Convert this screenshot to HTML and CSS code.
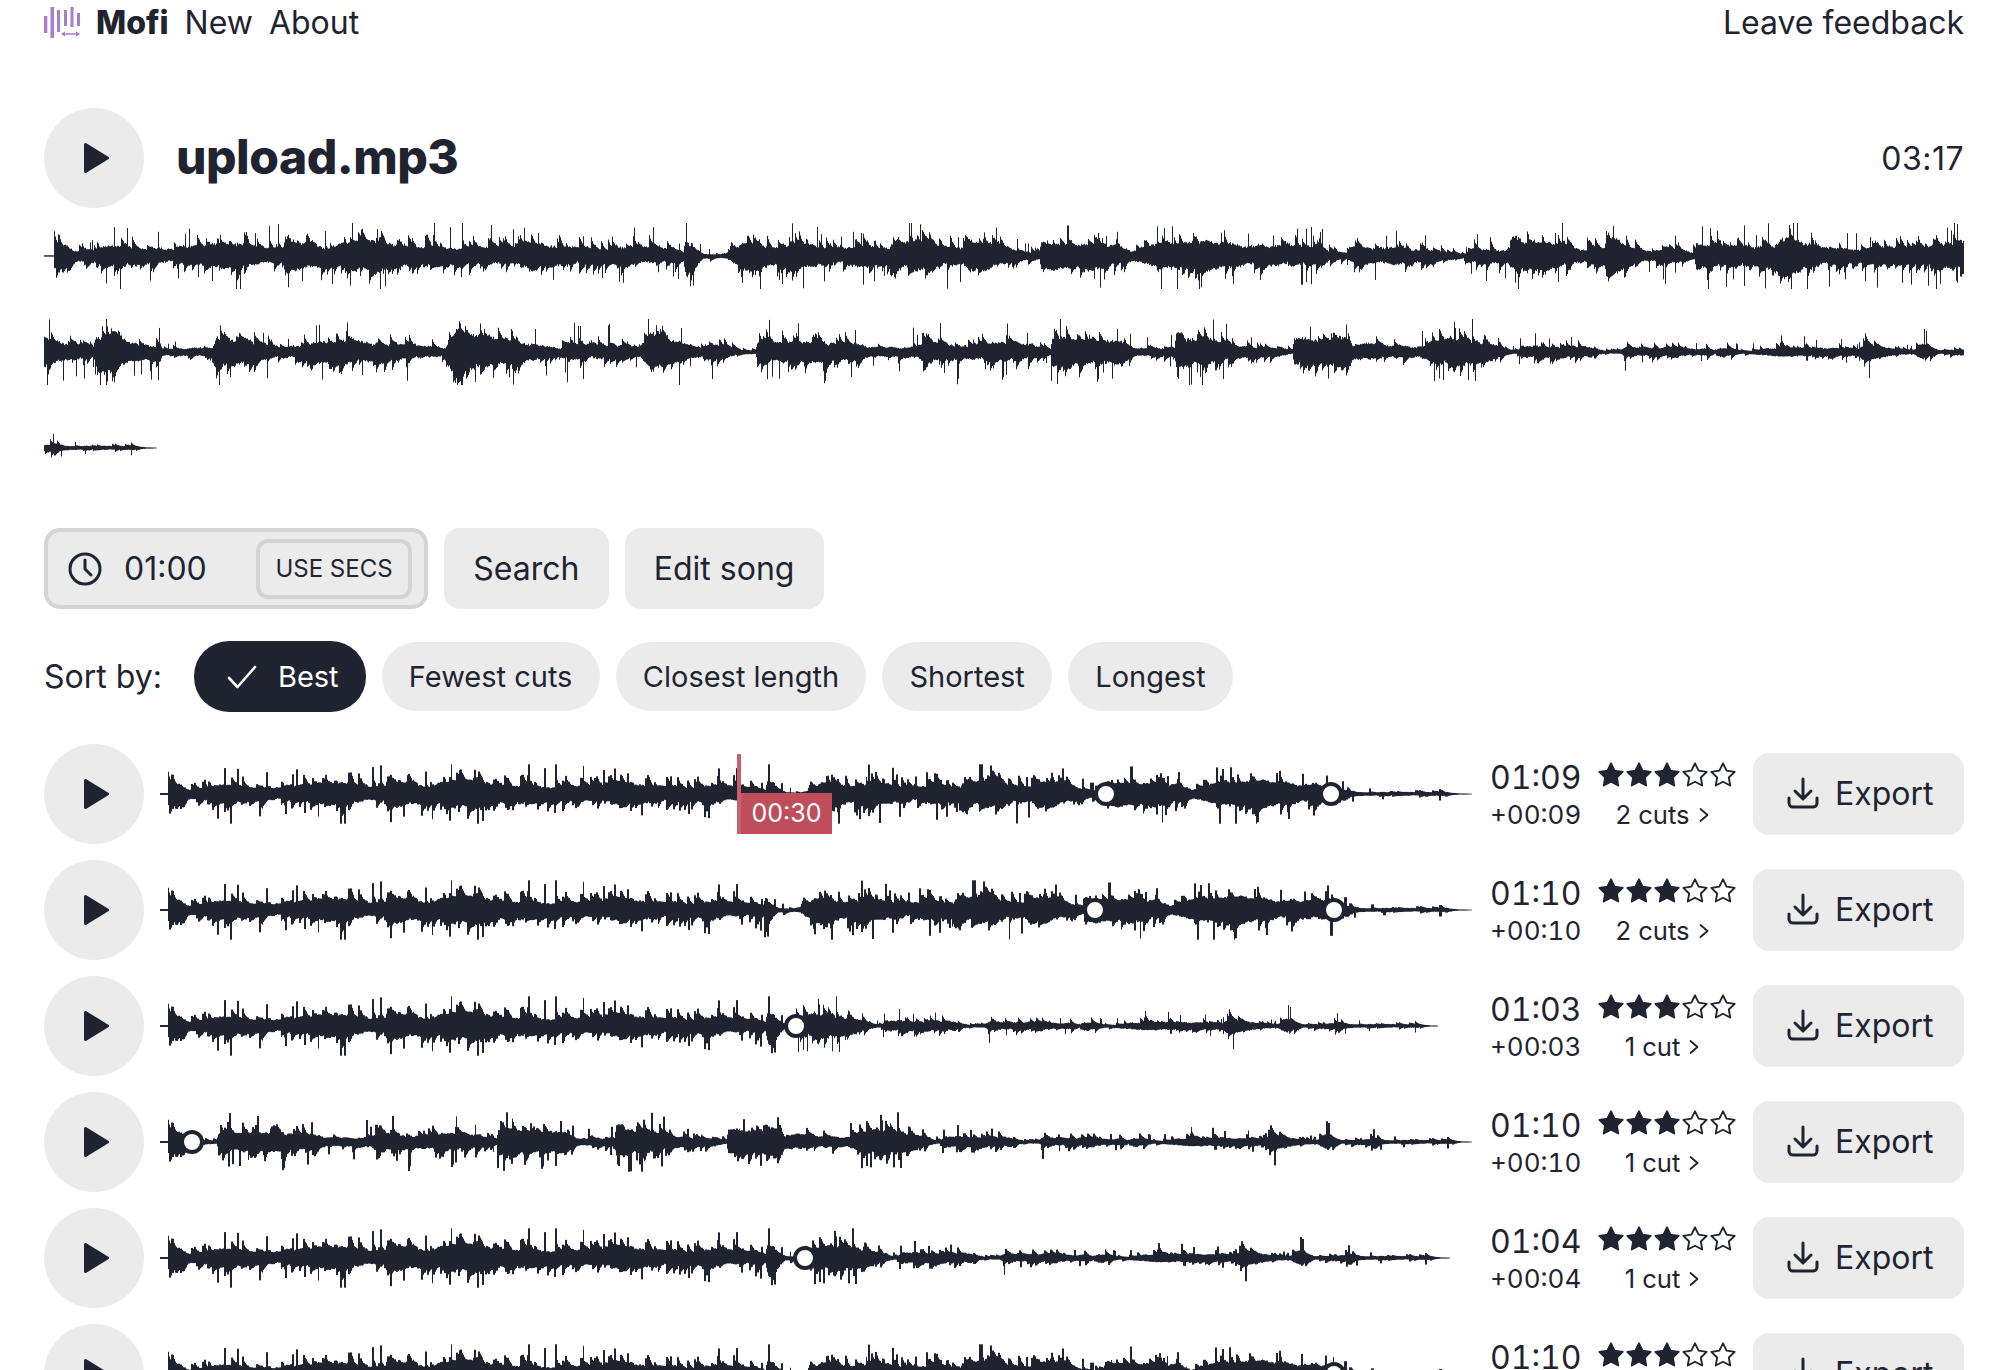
FILE: index.html
```html
<!DOCTYPE html>
<html lang="en">

<head>
    <meta charset="UTF-8">
    <meta name="viewport" content="width=device-width, initial-scale=1.0">
    <title>Mofi</title>
    <link rel="stylesheet" href="styles.css">
</head>

<body>
    <!-- icons used more than once -->
    <svg class="defs" width="0" height="0">
        <symbol id="i-play" viewBox="0 0 25 30">
            <path d="M1.5 1.5 L23.5 15 L1.5 28.5 Z" fill="currentColor" stroke="currentColor" stroke-width="3" stroke-linejoin="round" />
        </symbol>
        <symbol id="i-star" viewBox="0 0 24 24">
            <polygon points="12,2 15.09,8.26 22,9.27 17,14.14 18.18,21.02 12,17.77 5.82,21.02 7,14.14 2,9.27 8.91,8.26" />
        </symbol>
        <symbol id="i-chev" viewBox="0 0 10 14">
            <path d="M1.5 1 L8.5 7 L1.5 13" fill="none" stroke="currentColor" stroke-width="1.8" stroke-linecap="round" stroke-linejoin="round" />
        </symbol>
        <symbol id="i-down" viewBox="0 0 32 32">
            <path d="M16 2 V21 M8 14 L16 22 L24 14 M2 21 V26 A4 4 0 0 0 6 30 H26 A4 4 0 0 0 30 26 V21" fill="none" stroke="currentColor" stroke-width="3" stroke-linecap="round" stroke-linejoin="round" />
        </symbol>
        <symbol id="i-stars" viewBox="0 0 140 28">
            <use href="#i-star" x="0" y="0" width="28" height="28" class="star-on" />
            <use href="#i-star" x="28" y="0" width="28" height="28" class="star-on" />
            <use href="#i-star" x="56" y="0" width="28" height="28" class="star-on" />
            <use href="#i-star" x="84" y="0" width="28" height="28" />
            <use href="#i-star" x="112" y="0" width="28" height="28" />
        </symbol>
    </svg>

    <nav class="nav">
        <svg class="logo" viewBox="0 0 36 32" width="36" height="32">
            <g fill="#a77dd1">
                <rect x="0" y="9" width="3.3" height="17" />
                <rect x="6.5" y="0" width="3.5" height="31" />
                <rect x="13" y="3" width="3" height="22" />
                <rect x="20" y="3" width="3" height="16" />
                <rect x="26.5" y="0" width="3" height="20" />
                <rect x="33" y="6" width="3" height="13" />
                <path d="M17 27 L21 24.5 V26.3 H32 V24.5 L36 27 L32 29.5 V27.7 H21 V29.5 Z" />
            </g>
        </svg>
        <a class="brand">Mofi</a>
        <a>New</a>
        <a>About</a>
        <a class="feedback">Leave feedback</a>
    </nav>

    <header class="song">
        <button class="play"><svg width="25" height="30"><use href="#i-play" /></svg></button>
        <h1>upload.mp3</h1>
        <span class="dur">03:17</span>
    </header>

    <section class="lines">
        <canvas class="wave" data-line="0" width="1920" height="96"></canvas>
        <canvas class="wave" data-line="1" width="1920" height="96"></canvas>
        <canvas class="wave" data-line="2" width="1920" height="96"></canvas>
    </section>

    <div class="controls">
        <div class="target">
            <svg class="clock" viewBox="0 0 34 34" width="34" height="34">
                <circle cx="17" cy="17" r="15" fill="none" stroke="currentColor" stroke-width="3" />
                <path d="M17 8 V17 L23 23" fill="none" stroke="currentColor" stroke-width="3" stroke-linecap="round" stroke-linejoin="round" />
            </svg>
            <span class="target-val">01:00</span>
            <button class="secs">USE SECS</button>
        </div>
        <button class="btn">Search</button>
        <button class="btn">Edit song</button>
    </div>

    <div class="sort">
        <span class="sort-label">Sort by:</span>
        <button class="pill active">
            <svg viewBox="0 0 30 24" width="30" height="24">
                <path d="M2 13 L10.5 22 L28 2" fill="none" stroke="currentColor" stroke-width="2.6" stroke-linecap="round" stroke-linejoin="round" />
            </svg>
            Best
        </button>
        <button class="pill">Fewest cuts</button>
        <button class="pill">Closest length</button>
        <button class="pill">Shortest</button>
        <button class="pill">Longest</button>
    </div>

    <div class="results">
        <div class="row">
            <button class="play"><svg width="25" height="30"><use href="#i-play" /></svg></button>
            <div class="track">
                <canvas class="wave" data-row="0" width="1312" height="100"></canvas>
                <div class="mark">00:30</div>
            </div>
            <div class="info">
                <span class="len">01:09</span>
                <svg class="stars" width="140" height="28"><use href="#i-stars" /></svg>
                <span class="diff">+00:09</span>
                <a class="cuts">2 cuts <svg width="10" height="14"><use href="#i-chev" /></svg></a>
            </div>
            <button class="btn export"><svg width="32" height="32"><use href="#i-down" /></svg>Export</button>
        </div>
        <div class="row">
            <button class="play"><svg width="25" height="30"><use href="#i-play" /></svg></button>
            <div class="track"><canvas class="wave" data-row="1" width="1312" height="100"></canvas></div>
            <div class="info">
                <span class="len">01:10</span>
                <svg class="stars" width="140" height="28"><use href="#i-stars" /></svg>
                <span class="diff">+00:10</span>
                <a class="cuts">2 cuts <svg width="10" height="14"><use href="#i-chev" /></svg></a>
            </div>
            <button class="btn export"><svg width="32" height="32"><use href="#i-down" /></svg>Export</button>
        </div>
        <div class="row">
            <button class="play"><svg width="25" height="30"><use href="#i-play" /></svg></button>
            <div class="track"><canvas class="wave" data-row="2" width="1312" height="100"></canvas></div>
            <div class="info">
                <span class="len">01:03</span>
                <svg class="stars" width="140" height="28"><use href="#i-stars" /></svg>
                <span class="diff">+00:03</span>
                <a class="cuts">1 cut <svg width="10" height="14"><use href="#i-chev" /></svg></a>
            </div>
            <button class="btn export"><svg width="32" height="32"><use href="#i-down" /></svg>Export</button>
        </div>
        <div class="row">
            <button class="play"><svg width="25" height="30"><use href="#i-play" /></svg></button>
            <div class="track"><canvas class="wave" data-row="3" width="1312" height="100"></canvas></div>
            <div class="info">
                <span class="len">01:10</span>
                <svg class="stars" width="140" height="28"><use href="#i-stars" /></svg>
                <span class="diff">+00:10</span>
                <a class="cuts">1 cut <svg width="10" height="14"><use href="#i-chev" /></svg></a>
            </div>
            <button class="btn export"><svg width="32" height="32"><use href="#i-down" /></svg>Export</button>
        </div>
        <div class="row">
            <button class="play"><svg width="25" height="30"><use href="#i-play" /></svg></button>
            <div class="track"><canvas class="wave" data-row="4" width="1312" height="100"></canvas></div>
            <div class="info">
                <span class="len">01:04</span>
                <svg class="stars" width="140" height="28"><use href="#i-stars" /></svg>
                <span class="diff">+00:04</span>
                <a class="cuts">1 cut <svg width="10" height="14"><use href="#i-chev" /></svg></a>
            </div>
            <button class="btn export"><svg width="32" height="32"><use href="#i-down" /></svg>Export</button>
        </div>
        <div class="row">
            <button class="play"><svg width="25" height="30"><use href="#i-play" /></svg></button>
            <div class="track"><canvas class="wave" data-row="5" width="1312" height="100"></canvas></div>
            <div class="info">
                <span class="len">01:10</span>
                <svg class="stars" width="140" height="28"><use href="#i-stars" /></svg>
                <span class="diff">+00:10</span>
                <a class="cuts">1 cut <svg width="10" height="14"><use href="#i-chev" /></svg></a>
            </div>
            <button class="btn export"><svg width="32" height="32"><use href="#i-down" /></svg>Export</button>
        </div>
    </div>

    <script src="wave.js"></script>
</body>

</html>
```
FILE: styles.css
```css
* {
    margin: 0;
    padding: 0;
    box-sizing: border-box;
}

html,
body {
    width: 100%;
    height: 100%;
    overflow: hidden;
    background: #fff;
}

body {
    padding: 0 32px 0 44px;
    font-family: Inter, "Liberation Sans", sans-serif;
    font-size: 32px;
    color: #1f2430;
}

button {
    border: 0;
    font: inherit;
    color: inherit;
    background: #ebebeb;
}

.defs {
    position: absolute;
}

.nav {
    display: flex;
    align-items: center;
    gap: 16px;
    height: 44px;
}

.logo {
    margin-top: 2px;
}

.brand {
    font-weight: 800;
}

.feedback {
    margin-left: auto;
}

.song {
    display: flex;
    align-items: center;
    gap: 32px;
    margin-top: 64px;
}

.song h1 {
    margin-top: -3px;
    font-size: 48px;
    font-weight: 850;
    letter-spacing: -0.5px;
}

.dur {
    margin-left: auto;
    letter-spacing: 0.5px;
}

.play {
    flex: none;
    display: flex;
    align-items: center;
    justify-content: center;
    width: 100px;
    height: 100px;
    padding-left: 4px;
    border-radius: 50%;
}

.lines {
    display: flex;
    flex-direction: column;
}

.wave {
    display: block;
}

.controls {
    display: flex;
    gap: 16px;
    margin-top: 32px;
}

.target {
    display: flex;
    align-items: center;
    width: 384px;
    height: 81px;
    padding: 0 12px 0 20px;
    background: #ebebeb;
    border: 4px solid #d4d4d4;
    border-radius: 16px;
}

.clock {
    flex: none;
}

.target-val {
    margin-left: 22px;
}

.secs {
    margin-left: auto;
    width: 156px;
    height: 60px;
    font-size: 24px;
    border: 4px solid #d4d4d4;
    border-radius: 12px;
}

.btn {
    height: 81px;
    padding: 0 29.2px;
    border-radius: 16px;
}

.sort {
    display: flex;
    align-items: center;
    gap: 16px;
    height: 71px;
    margin-top: 32px;
}

.sort-label {
    margin-right: 16px;
}

.pill {
    display: flex;
    align-items: center;
    height: 69px;
    padding: 0 27.2px;
    font-size: 29px;
    border-radius: 35px;
}

.pill.active {
    gap: 21px;
    height: 71px;
    padding: 0 27px 0 33px;
    color: #fff;
    background: #1f2430;
}

.results {
    display: flex;
    flex-direction: column;
    gap: 16px;
    margin-top: 32px;
}

.row {
    display: flex;
    align-items: center;
    flex: none;
}

.track {
    position: relative;
    flex: none;
    width: 1312px;
    margin-left: 16px;
}

.mark {
    position: absolute;
    left: 577px;
    top: 49px;
    width: 95px;
    height: 41px;
    line-height: 41px;
    padding-left: 4px;
    text-align: center;
    font-size: 25px;
    color: #fff;
    background: #bf4d5c;
}

.mark::before {
    content: "";
    position: absolute;
    left: 0;
    bottom: 0;
    width: 4px;
    height: 80px;
    background: #c9606d;
}

.info {
    display: grid;
    grid-template-columns: 107px 138px;
    align-items: center;
    margin-left: 18px;
    flex: none;
}

.len {
    height: 44px;
    line-height: 44px;
    font-variant-numeric: tabular-nums;
}

.stars {
    margin-top: -7px;
    fill: none;
    stroke: #1f2430;
    stroke-width: 1.6;
    stroke-linejoin: round;
}

.star-on {
    fill: #1f2430;
}

.diff {
    margin-top: -2px;
    font-size: 26px;
    line-height: 34px;
    font-variant-numeric: tabular-nums;
}

.cuts {
    display: flex;
    align-items: center;
    justify-content: center;
    gap: 9px;
    margin-top: -2px;
    padding-right: 8px;
    font-size: 25.6px;
    line-height: 34px;
}

.export {
    display: flex;
    align-items: center;
    gap: 16px;
    flex: none;
    width: 211px;
    height: 82px;
    margin-left: auto;
    padding: 0 0 2px 34px;
}
```
FILE: wave.js
```js
// one song, drawn whole on three lines and cut up in the result rows

// [x on the line, half height in px], read off the full song
var line1 = [[44, .8], [53, .8], [54, 18], [75, 6], [96, 7], [97, 10], [160, 8], [230, 13], [240, 17], [250, 9], [283, 7], [285, 22], [300, 15], [330, 9], [345, 14], [380, 16], [400, 13], [420, 10], [519, 9], [520, 16], [560, 11], [600, 8], [640, 10], [670, 9], [683, 5], [686, 22], [690, 14], [703, 3], [720, 2], [730, 4], [736, 9], [749, 15], [774, 10], [791, 14], [816, 10], [833, 8], [858, 13], [888, 9], [892, 15], [921, 17], [942, 10], [963, 11], [968, 17], [989, 12], [1014, 6], [1039, 4], [1041, 16], [1069, 12], [1098, 14], [1132, 6], [1157, 13], [1191, 17], [1208, 15], [1237, 11], [1279, 12], [1313, 9], [1346, 3], [1352, 8], [1382, 9], [1424, 7], [1465, 2.5], [1470, 8], [1507, 8], [1516, 20], [1541, 13], [1570, 12], [1574, 7], [1604, 10], [1606, 22], [1624, 12], [1645, 5], [1675, 8], [1694, 3], [1696, 13], [1758, 11], [1779, 18], [1788, 20], [1821, 10], [1859, 7], [1880, 10], [1927, 8], [1938, 14], [1964, 15]];
var line2 = [[44, 16], [50, 12], [90, 7], [93, 5], [95, 16], [105, 22], [130, 10], [160, 8], [162, 3], [212, 5], [216, 17], [250, 12], [270, 7], [280, 5], [335, 14], [400, 8], [445, 5], [455, 26], [500, 13], [560, 4], [565, 9], [620, 8], [640, 5], [650, 19], [700, 5], [715, 8], [745, 2], [755, 2], [757, 10], [795, 12], [858, 9], [871, 5], [917, 6], [925, 14], [942, 8], [1027, 9], [1050, 3], [1052, 14], [1119, 13], [1132, 4], [1174, 5], [1176, 20], [1212, 12], [1237, 6], [1279, 5], [1292, 2], [1294, 14], [1334, 14], [1346, 18], [1352, 8], [1415, 6], [1445, 14], [1486, 10], [1507, 3], [1518, 2], [1521, 7], [1591, 5], [1599, 2], [1620, 2], [1624, 5], [1708, 4], [1716, 2], [1720, 6], [1742, 1.5], [1758, 3], [1779, 5], [1859, 4], [1863, 10], [1884, 5], [1913, 2], [1921, 8], [1938, 2], [1964, 3]];
var line3 = [[44, 3], [50, 4.5], [55, 4], [70, 2], [90, 2.5], [100, 2], [120, 2], [130, 2.5], [145, 1], [157, .4]];

var SONG = 3953;

// cuts of each row: [x in canvas, song position, song px per canvas px]
var K = 1.053;
var rows = [
    { end: 1312, cuts: [[8, 10, K], [946, 997, K], [1171, 3840, .8]], dots: [946, 1171] },
    { end: 1312, cuts: [[8, 10, K], [596, 629, K], [604, 645, K], [924, 997, K], [1174, 3840, .82]], dots: [935, 1174] },
    { end: 1278, cuts: [[8, 10, K], [636, 3308, 1]], dots: [636] },
    { end: 1312, cuts: [[8, 10, K], [32, 2605, K]], dots: [32] },
    { end: 1290, cuts: [[8, 10, K], [645, 3300, 1.01]], dots: [645] },
    { end: 1312, cuts: [[8, 10, K], [1174, 3840, .82]], dots: [1174] }
];

// small seeded random so the picture is the same every time
var seed = 20191110;
function rnd() {
    seed = (seed + 0x6D2B79F5) | 0;
    var t = Math.imul(seed ^ (seed >>> 15), 1 | seed);
    t = (t + Math.imul(t ^ (t >>> 7), 61 | t)) ^ t;
    return ((t ^ (t >>> 14)) >>> 0) / 4294967296;
}

function buildEnv() {
    var pts = [];
    line1.forEach(p => pts.push([p[0] - 44, p[1]]));
    line2.forEach(p => pts.push([1920 + p[0] - 44, p[1]]));
    line3.forEach(p => pts.push([3840 + p[0] - 44, p[1]]));
    var env = [], j = 0;
    for (var t = 0; t < SONG; t++) {
        while (j < pts.length - 2 && pts[j + 1][0] <= t) j++;
        var a = pts[j], b = pts[j + 1];
        var f = Math.min(1, Math.max(0, (t - a[0]) / (b[0] - a[0] || 1)));
        env.push(a[1] + (b[1] - a[1]) * f);
    }
    return env;
}

function buildSong() {
    var env = buildEnv();
    var top = [], bot = [];
    var slowT = 0, slowB = 0, toothT = 0, toothB = 0;
    for (var t = 0; t < SONG; t++) {
        var e = env[t];
        slowT += (rnd() - .5) * .2 - slowT * .15;
        slowB += (rnd() - .5) * .2 - slowB * .15;
        toothT *= .7;
        toothB *= .7;
        var pike = Math.min(1, e / 9);
        var spikeT = 0, spikeB = 0;
        if (e > 1.5 && rnd() < .13) toothT = Math.max(toothT, (3 + rnd() * 9) * pike);
        if (e > 1.5 && rnd() < .13) toothB = Math.max(toothB, (3 + rnd() * 9) * pike);
        if (e > 2 && rnd() < .04) spikeT = (9 + rnd() * 12) * pike;
        if (e > 2 && rnd() < .04) spikeB = (9 + rnd() * 12) * pike;
        // the song never peaks past about 33px
        top.push(Math.min(33, e * (.85 + slowT + (rnd() - .5) * .16) + toothT + spikeT));
        bot.push(Math.min(33, e * (.82 + slowB + (rnd() - .5) * .16) + toothB + spikeB));
    }
    return { top: top, bot: bot };
}

var song = buildSong();

function bar(ctx, x, cy, t0, t1, gain) {
    var a = 0, b = 0;
    for (var t = Math.floor(t0); t < Math.max(t0 + 1, t1) && t < SONG; t++) {
        a = Math.max(a, song.top[t]);
        b = Math.max(b, song.bot[t]);
    }
    a *= gain;
    b *= gain;
    ctx.fillRect(x, cy - a, 1, a + b);
}

function drawLine(cv, n) {
    var ctx = cv.getContext("2d");
    ctx.fillStyle = "#1f2430";
    var len = n == 2 ? 113 : 1920;
    for (var x = 0; x < len; x++) {
        bar(ctx, x, 48, n * 1920 + x, n * 1920 + x + 1, 1);
    }
}

function drawRow(cv, row) {
    var ctx = cv.getContext("2d");
    var cy = 50;
    ctx.fillStyle = "#1f2430";
    ctx.fillRect(0, cy - 1, 8, 2);
    row.cuts.forEach((c, i) => {
        var next = row.cuts[i + 1] ? row.cuts[i + 1][0] : row.end;
        for (var x = c[0]; x < next; x++) {
            var t = c[1] + (x - c[0]) * c[2];
            bar(ctx, x, cy, t, t + c[2], .9);
        }
    });
    row.dots.forEach(x => {
        ctx.beginPath();
        ctx.arc(x, cy, 10, 0, Math.PI * 2);
        ctx.fillStyle = "#fff";
        ctx.fill();
        ctx.lineWidth = 4;
        ctx.strokeStyle = "#1f2430";
        ctx.stroke();
    });
}

document.querySelectorAll("canvas.wave").forEach(cv => {
    if (cv.dataset.line !== undefined) drawLine(cv, +cv.dataset.line);
    else drawRow(cv, rows[+cv.dataset.row]);
});
```
